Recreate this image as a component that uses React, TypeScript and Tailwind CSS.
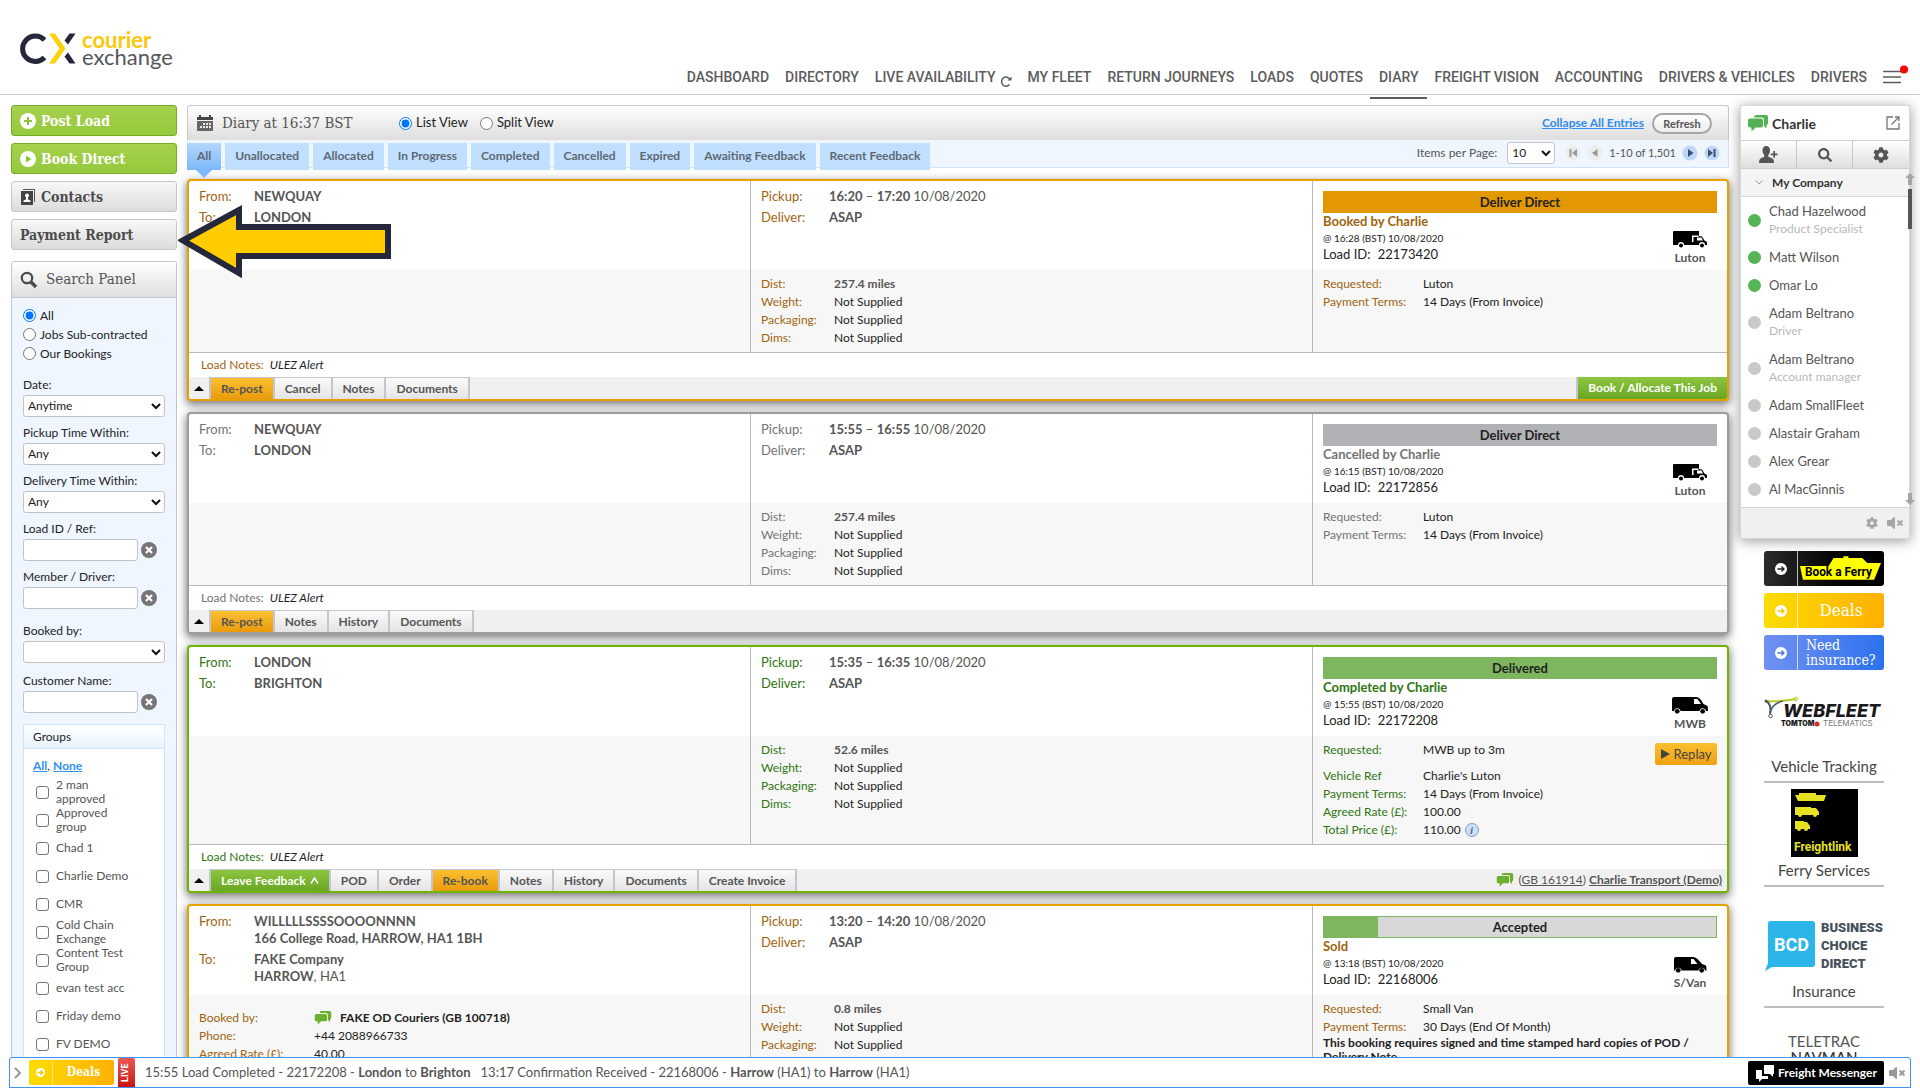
import React from "react";
import { FaCog, FaSearch, FaVolumeMute } from "react-icons/fa";

type Theme = "amber" | "grey" | "green";

type Row = { label: string; value: React.ReactNode; spaced?: boolean };

type Action = { text: string; tone?: "orange" | "green" };

type Load = {
  theme: Theme;
  from: React.ReactNode[];
  to: React.ReactNode[];
  start: string;
  end: string;
  status: string;
  progress?: number;
  event: string;
  at: string;
  id: string;
  vehicle: "Luton" | "MWB" | "S/Van";
  booking?: boolean;
  dist: string;
  rows: Row[];
  replay?: boolean;
  warning?: string;
  actions: Action[];
  footer?: "allocate" | "member";
};

const themes = {
  amber: {
    border: "border-[#e6a100]",
    label: "text-[#a0640f]",
    bar: "bg-[#e39700]",
  },
  grey: {
    border: "border-[#9c9ca2]",
    label: "text-[#737373]",
    bar: "bg-[#b1b2b6]",
  },
  green: {
    border: "border-[#6fb400]",
    label: "text-[#2f7512]",
    bar: "bg-[#7eb55f]",
  },
};

const slab = "font-['DejaVu_Serif_Condensed','DejaVu_Serif',serif]";
const greyFade = "bg-linear-to-b from-white to-[#dedede]";

const navItems = [
  "DASHBOARD",
  "DIRECTORY",
  "LIVE AVAILABILITY",
  "MY FLEET",
  "RETURN JOURNEYS",
  "LOADS",
  "QUOTES",
  "DIARY",
  "FREIGHT VISION",
  "ACCOUNTING",
  "DRIVERS & VEHICLES",
  "DRIVERS",
];

const tabs = [
  "All",
  "Unallocated",
  "Allocated",
  "In Progress",
  "Completed",
  "Cancelled",
  "Expired",
  "Awaiting Feedback",
  "Recent Feedback",
];

const groups = [
  "2 man approved",
  "Approved group",
  "Chad 1",
  "Charlie Demo",
  "CMR",
  "Cold Chain Exchange",
  "Content Test Group",
  "evan test acc",
  "Friday demo",
  "FV DEMO",
];

const contacts = [
  { name: "Chad Hazelwood", role: "Product Specialist", online: true },
  { name: "Matt Wilson", online: true },
  { name: "Omar Lo", online: true },
  { name: "Adam Beltrano", role: "Driver" },
  { name: "Adam Beltrano", role: "Account manager" },
  { name: "Adam SmallFleet" },
  { name: "Alastair Graham" },
  { name: "Alex Grear" },
  { name: "Al MacGinnis" },
];

const loads: Load[] = [
  {
    theme: "amber",
    from: [<b>NEWQUAY</b>],
    to: [<b>LONDON</b>],
    start: "16:20",
    end: "17:20",
    status: "Deliver Direct",
    event: "Booked by Charlie",
    at: "@ 16:28 (BST) 10/08/2020",
    id: "22173420",
    vehicle: "Luton",
    dist: "257.4 miles",
    rows: [
      { label: "Requested:", value: "Luton" },
      { label: "Payment Terms:", value: "14 Days (From Invoice)" },
    ],
    actions: [
      { text: "Re-post", tone: "orange" },
      { text: "Cancel" },
      { text: "Notes" },
      { text: "Documents" },
    ],
    footer: "allocate",
  },
  {
    theme: "grey",
    from: [<b>NEWQUAY</b>],
    to: [<b>LONDON</b>],
    start: "15:55",
    end: "16:55",
    status: "Deliver Direct",
    event: "Cancelled by Charlie",
    at: "@ 16:15 (BST) 10/08/2020",
    id: "22172856",
    vehicle: "Luton",
    dist: "257.4 miles",
    rows: [
      { label: "Requested:", value: "Luton" },
      { label: "Payment Terms:", value: "14 Days (From Invoice)" },
    ],
    actions: [
      { text: "Re-post", tone: "orange" },
      { text: "Notes" },
      { text: "History" },
      { text: "Documents" },
    ],
  },
  {
    theme: "green",
    from: [<b>LONDON</b>],
    to: [<b>BRIGHTON</b>],
    start: "15:35",
    end: "16:35",
    status: "Delivered",
    event: "Completed by Charlie",
    at: "@ 15:55 (BST) 10/08/2020",
    id: "22172208",
    vehicle: "MWB",
    dist: "52.6 miles",
    rows: [
      { label: "Requested:", value: "MWB up to 3m", spaced: true },
      { label: "Vehicle Ref", value: "Charlie's Luton" },
      { label: "Payment Terms:", value: "14 Days (From Invoice)" },
      { label: "Agreed Rate (£):", value: "100.00" },
      {
        label: "Total Price (£):",
        value: (
          <span className="flex items-center gap-1">
            110.00
            <span className="flex h-[14px] w-[14px] items-center justify-center rounded-full border border-[#7f9cc0] bg-[#cfe0f5] font-['Liberation_Serif',serif] text-[11px] leading-none font-bold text-[#4a6fa5] italic">
              i
            </span>
          </span>
        ),
      },
    ],
    replay: true,
    actions: [
      { text: "Leave Feedback", tone: "green" },
      { text: "POD" },
      { text: "Order" },
      { text: "Re-book", tone: "orange" },
      { text: "Notes" },
      { text: "History" },
      { text: "Documents" },
      { text: "Create Invoice" },
    ],
    footer: "member",
  },
  {
    theme: "amber",
    from: [<b>WILLLLLSSSSOOOONNNN</b>, <b>166 College Road, HARROW, HA1 1BH</b>],
    to: [
      <b>FAKE Company</b>,
      <>
        <b>HARROW</b>, HA1
      </>,
    ],
    start: "13:20",
    end: "14:20",
    status: "Accepted",
    progress: 14,
    event: "Sold",
    at: "@ 13:18 (BST) 10/08/2020",
    id: "22168006",
    vehicle: "S/Van",
    booking: true,
    dist: "0.8 miles",
    rows: [
      { label: "Requested:", value: "Small Van" },
      { label: "Payment Terms:", value: "30 Days (End Of Month)" },
    ],
    warning:
      "This booking requires signed and time stamped hard copies of POD / Delivery Note",
    actions: [],
  },
];

const ChatIcon = ({ className }: { className: string }) => (
  <svg viewBox="0 0 20 17" fill="currentColor" className={className}>
    <path d="M8 0h10q2 0 2 2v6q0 2-1.500 2v3.500L16 11V5q0-2.500-2.500-2.500H6Q6 0 8 0z" />
    <path d="M2 3.500h11q2 0 2 2v5q0 2-2 2H7.500L3.500 16.500v-4H2q-2 0-2-2v-5q0-2 2-2z" />
  </svg>
);

const ArrowCircle = ({ color }: { color: string }) => (
  <svg viewBox="0 0 12 12" className="h-3 w-3">
    <circle cx="6" cy="6" r="6" fill="#fff" />
    <path d="M2.500 6h6.500M6.500 3.500L9 6 6.500 8.500" fill="none" stroke={color} strokeWidth="1.300" />
  </svg>
);

const Logo = () => (
  <a href="#" aria-label="Courier Exchange" className="flex items-center gap-[6px]">
    <svg viewBox="0 0 56 38" className="h-[38px] w-14">
      <path d="M24.500 11A12.700 12.700 0 1 0 24.500 28.500" fill="none" stroke="#25273a" strokeWidth="5" />
      <path d="M29 4.500h6L45.500 19.500 35 34.500h-6L39.500 19.500z" fill="#fdd20a" />
      <path d="M49.500 4.500h6L48 15.500l-3.500-4zM44.500 27.500l3.500-4 7.500 11h-6z" fill="#25273a" />
    </svg>
    <span className="flex flex-col text-[22px] leading-[17px]">
      <span className="font-bold text-[#fdc70a]">courier</span>
      <span className="text-[#55565f]">exchange</span>
    </span>
  </a>
);

const VanIcon = ({ type }: { type: Load["vehicle"] }) => {
  if (type === "Luton") {
    return (
      <svg viewBox="0 0 34 17" className="h-[17px] w-[34px]">
        <path d="M1 0h25v5l3 .5 2.500 4L34 11v3h-2a3 3 0 0 0-6 0H11a3 3 0 0 0-6 0H0V1q0-1 1-1z" fill="#000" />
        <path d="M19 4.500h6.500V6h-5v5H19z" fill="#fff" />
        <path d="M24 6.500h4.500l1.500 3h-6z" fill="#fff" />
        <circle cx="8" cy="14.500" r="2" fill="#000" />
        <circle cx="29" cy="14.500" r="2" fill="#000" />
      </svg>
    );
  }
  return (
    <svg viewBox="0 0 36 17" className="h-[17px] w-[36px]">
      <path
        d={
          type === "MWB"
            ? "M2 0h22q3 0 5 3l2.500 4 4 2q.5 1 .5 5h-2a3.300 3.300 0 0 0-6.500 0H8.500a3.300 3.300 0 0 0-6.500 0H0V2q0-2 2-2z"
            : "M4 1h17q3 0 5 2.500L30 8l4 1.500q.5 1 .5 5H33a3.300 3.300 0 0 0-6.500 0H9.500a3.300 3.300 0 0 0-6.500 0H2V3q0-2 2-2z"
        }
        fill="#000"
      />
      <path d={type === "MWB" ? "M22 2h3.500l3.500 5h-7z" : "M19 3h2.500l4 5H19z"} fill="#fff" />
      <circle cx={type === "MWB" ? 5.2 : 6.2} cy="14.300" r="2.400" fill="#000" />
      <circle cx={type === "MWB" ? 30.7 : 29.7} cy="14.300" r="2.400" fill="#000" />
    </svg>
  );
};

const Header = () => (
  <header className="flex h-[95px] shrink-0 justify-between border-b border-[#c8c8c8] pl-5">
    <div className="pt-[29px]">
      <Logo />
    </div>
    <nav className="flex items-end gap-4 pr-[11px] font-['Roboto',sans-serif] text-sm font-medium text-[#5c5c5c]">
      {navItems.map((item) => (
        <a
          key={item}
          href="#"
          className={
            item === "DIARY"
              ? "-mx-[9px] -mb-[5px] border-b-2 border-[#5c5c5c] px-[9px] pb-[10px]"
              : "flex items-end gap-1 pb-[7px]"
          }
        >
          {item}
          {item === "LIVE AVAILABILITY" && (
            <svg viewBox="0 0 12 12" className="h-3 w-3">
              <path d="M9.500 9.500A4.500 4.500 0 1 1 10 4.500" fill="none" stroke="#5c5c5c" strokeWidth="1.500" />
              <path d="M11.500 1.500v4H7.500z" fill="#5c5c5c" />
            </svg>
          )}
        </a>
      ))}
      <button type="button" aria-label="Menu" className="pb-[9px]">
        <svg viewBox="0 0 26 20" className="h-5 w-[26px]">
          <path d="M0 6.500h18M0 12h18M0 17.500h18" stroke="#5c5c5c" strokeWidth="1.500" />
          <circle cx="21" cy="4.500" r="4" fill="#f00" />
        </svg>
      </button>
    </nav>
  </header>
);

const SelectBox = ({ id, value, className }: { id: string; value: string; className: string }) => (
  <div className={`relative ${className}`}>
    <select
      id={id}
      className="h-[22px] w-full appearance-none rounded-[3px] border border-[#c3c3c3] bg-white pl-1 text-xs leading-5 text-[#222]"
    >
      <option>{value}</option>
    </select>
    <svg viewBox="0 0 10 7" className="pointer-events-none absolute top-2 right-1 h-[7px] w-[10px]">
      <path d="M1 1l4 4 4-4" fill="none" stroke="#111" strokeWidth="2" />
    </svg>
  </div>
);

const SelectField = ({ id, label, value = "" }: { id: string; label: string; value?: string }) => (
  <div>
    <label htmlFor={id} className="block leading-5">
      {label}
    </label>
    <SelectBox id={id} value={value} className="" />
  </div>
);

const TextField = ({ id, label }: { id: string; label: string }) => (
  <div>
    <label htmlFor={id} className="block leading-5">
      {label}
    </label>
    <div className="flex items-center gap-[3px]">
      <input id={id} type="text" className="h-[22px] w-[115px] rounded-[3px] border border-[#c3c3c3] bg-white px-1" />
      <button type="button" aria-label={`Clear ${label}`}>
        <svg viewBox="0 0 16 16" className="h-4 w-4">
          <circle cx="8" cy="8" r="8" fill="#757575" />
          <path d="M5 5l6 6M11 5l-6 6" stroke="#fff" strokeWidth="2.400" />
        </svg>
      </button>
    </div>
  </div>
);

const SideButton = ({ text, icon, green }: { text: string; icon?: React.ReactNode; green?: boolean }) => (
  <button
    type="button"
    className={`flex h-[31px] w-full items-center gap-[5px] rounded-[3px] border px-2 text-left text-sm font-bold ${slab} ${
      green
        ? "border-[#76ab27] bg-linear-to-b from-[#a6d14c] to-[#94c93d] text-white"
        : "border-[#c6c6c6] bg-linear-to-b from-[#f8f8f8] to-[#dcdcdc] text-[#4c4c4c]"
    }`}
  >
    {icon}
    {text}
  </button>
);

const Sidebar = () => (
  <aside className="flex w-[166px] shrink-0 flex-col text-xs text-[#222]">
    <div className="flex flex-col gap-[7px]">
      <SideButton
        green
        text="Post Load"
        icon={
          <svg viewBox="0 0 16 16" className="h-4 w-4">
            <circle cx="8" cy="8" r="8" fill="#fff" />
            <path d="M8 4v8M4 8h8" stroke="#8fc43a" strokeWidth="2" />
          </svg>
        }
      />
      <SideButton
        green
        text="Book Direct"
        icon={
          <svg viewBox="0 0 16 16" className="h-4 w-4">
            <circle cx="8" cy="8" r="8" fill="#fff" />
            <path d="M6 4.500l5.500 3.500L6 11.500z" fill="#8fc43a" />
          </svg>
        }
      />
      <SideButton
        text="Contacts"
        icon={
          <svg viewBox="0 0 16 16" className="h-4 w-4">
            <path d="M3 0h12v13h-1V1H3z" fill="#555" />
            <path d="M1 2h12v14H1z" fill="#444" />
            <circle cx="7" cy="6.500" r="2" fill="#fff" />
            <path d="M6 8h2v2.500l2.500 1V13h-7v-1.500L6 10.500z" fill="#fff" />
          </svg>
        }
      />
      <div className="relative">
        <SideButton text="Payment Report" />
        <svg
          viewBox="0 0 214 76"
          className="pointer-events-none absolute -top-4 left-[167px] z-10 h-[76px] w-[214px]"
        >
          <path d="M5 37.500L61 7v17h149v29H61v17z" fill="#fc0" stroke="#25273a" strokeWidth="6" />
        </svg>
      </div>
    </div>
    <section className="mt-[11px] flex-1 rounded-t-[3px] border border-b-0 border-[#c3c7cc] bg-[#eff6ff]">
      <h2
        className={`flex h-[36px] items-center gap-2 border-b border-[#c3c7cc] px-2 text-[15px] text-[#555] ${slab} ${greyFade}`}
      >
        <svg viewBox="0 0 18 18" className="h-[18px] w-[18px]">
          <circle cx="7" cy="7" r="5.200" fill="none" stroke="#4a4a4a" strokeWidth="2.200" />
          <path d="M11 11l5 5" stroke="#4a4a4a" strokeWidth="3.600" />
        </svg>
        Search Panel
      </h2>
      <form className="px-[11px] pt-2">
        {["All", "Jobs Sub-contracted", "Our Bookings"].map((text, i) => (
          <label key={text} className="flex items-center gap-1 leading-[19px]">
            <input type="radio" name="scope" defaultChecked={i === 0} className="h-[13px] w-[13px]" />
            {text}
          </label>
        ))}
        <div className="mt-3 flex flex-col gap-[6px]">
          <SelectField id="date" label="Date:" value="Anytime" />
          <SelectField id="pickup" label="Pickup Time Within:" value="Any" />
          <SelectField id="delivery" label="Delivery Time Within:" value="Any" />
          <TextField id="load-id" label="Load ID / Ref:" />
          <TextField id="member" label="Member / Driver:" />
        </div>
        <div className="mt-3 flex flex-col gap-2">
          <SelectField id="booked-by" label="Booked by:" />
          <TextField id="customer" label="Customer Name:" />
        </div>
        <fieldset className="mt-[11px] border border-[#cfe6fa] bg-white">
          <div className="h-6 border-b border-[#cfe6fa] bg-linear-to-b from-white to-[#e8f4ff] px-[9px] leading-6">
            Groups
          </div>
          <div className="px-[9px] pt-2 pb-2">
            <p className="pb-[3px] leading-[18px]">
              <a href="#" className="font-bold text-[#3191ee] underline">
                All
              </a>
              ,{" "}
              <a href="#" className="font-bold text-[#3191ee] underline">
                None
              </a>
            </p>
            {groups.map((group) => (
              <label key={group} className="flex h-7 items-center gap-[7px] pr-5 pl-[3px] leading-[14px] text-[#555]">
                <input
                  type="checkbox"
                  className="h-[13px] w-[13px] shrink-0 appearance-none rounded-[3px] border border-[#767676] bg-white"
                />
                {group}
              </label>
            ))}
          </div>
        </fieldset>
      </form>
    </section>
  </aside>
);

const PagerButton = ({ label, path, active }: { label: string; path: string; active?: boolean }) => (
  <button type="button" aria-label={label}>
    <svg viewBox="0 0 16 16" className="h-4 w-4">
      <circle cx="8" cy="8" r="7.500" fill={active ? "#bdd6fa" : "#ededed"} />
      <path d={path} fill={active ? "#3b4f68" : "#9a9a9a"} />
    </svg>
  </button>
);

const DiaryHeader = () => (
  <div>
    <div
      className={`flex h-[35px] items-center rounded-t-[3px] border border-b-0 border-[#c8c8c8] pr-4 pl-[9px] ${greyFade}`}
    >
      <svg viewBox="0 0 16 16" className="h-4 w-4">
        <path d="M0 2h2V0h2v2h8V0h2v2h2v3H0z" fill="#444" />
        <path d="M0 6h16v10H0z" fill="#666" />
        <path d="M6 8h2v2H6zM9 8h2v2H9zM12 8h2v2h-2zM3 11h2v2H3zM6 11h2v2H6zM9 11h2v2H9zM12 11h2v2h-2z" fill="#e8e8e8" />
      </svg>
      <h1 className={`w-[186px] pl-[9px] text-[15px] whitespace-nowrap text-[#555] ${slab}`}>Diary at 16:37 BST</h1>
      <div className="flex gap-3 text-[13px] text-[#222]">
        <label className="flex items-center gap-1">
          <input type="radio" name="view" defaultChecked className="h-[13px] w-[13px]" />
          List View
        </label>
        <label className="flex items-center gap-1">
          <input type="radio" name="view" className="h-[13px] w-[13px]" />
          Split View
        </label>
      </div>
      <a href="#" className="ml-auto text-xs font-bold text-[#2f8cf0] underline">
        Collapse All Entries
      </a>
      <button
        type="button"
        className="ml-2 h-[21px] w-[60px] rounded-full border-2 border-[#a5a5a5] bg-linear-to-b from-white to-[#ececec] text-[11px] leading-none font-bold text-[#555]"
      >
        Refresh
      </button>
    </div>
    <div className="flex h-7 items-start border-r border-b border-[#cfe4fa] bg-[#eff6ff] pt-[2px]">
      <div className="flex gap-1">
        {tabs.map((tab, i) => (
          <div key={tab} className="relative">
            <button
              type="button"
              className={`h-[27px] px-[10px] text-xs font-bold text-[#5d6873] ${
                i === 0 ? "bg-linear-to-b from-[#b4d6fb] to-[#7db9fb]" : "bg-[#c1e0ff]"
              }`}
            >
              {tab}
            </button>
            {i === 0 && (
              <svg viewBox="0 0 16 8" className="absolute top-full left-1/2 h-2 w-4 -translate-x-1/2">
                <path d="M0 0h16L8 8z" fill="#7db9fb" />
              </svg>
            )}
          </div>
        ))}
      </div>
      <div className="ml-auto flex items-center gap-[6px] pr-2 text-xs text-[#555]">
        <label htmlFor="per-page">Items per Page:</label>
        <SelectBox id="per-page" value="10" className="mx-1 w-12" />
        <PagerButton label="First page" path="M4.500 4h2v8h-2zM12 4v8L7 8z" />
        <PagerButton label="Previous page" path="M10.500 4v8L5 8z" />
        <span className="text-[11px]">1-10 of 1,501</span>
        <PagerButton active label="Next page" path="M6 4v8l5.500-4z" />
        <PagerButton active label="Last page" path="M4 4v8l5-4zM9.500 4h2v8h-2z" />
      </div>
    </div>
  </div>
);

const LoadCard = ({ load }: { load: Load }) => {
  const theme = themes[load.theme];
  return (
    <article
      className={`overflow-hidden rounded-[4px] border-2 bg-white text-xs text-[#222] shadow-[0_3px_9px_1px_rgba(0,0,0,0.5)] ${theme.border}`}
    >
      <div className="grid grid-cols-[562fr_562fr_414fr] divide-x divide-[#b9b9bd]">
        {/* Route */}
        <div className="flex flex-col">
          <dl className="grid min-h-[89px] grid-cols-[55px_1fr] content-start gap-y-1 px-[10px] pt-[7px] text-[13px] leading-[17px] text-[#555]">
            <dt className={theme.label}>From:</dt>
            <dd>
              {load.from.map((line, i) => (
                <div key={i}>{line}</div>
              ))}
            </dd>
            <dt className={theme.label}>To:</dt>
            <dd>
              {load.to.map((line, i) => (
                <div key={i}>{line}</div>
              ))}
            </dd>
          </dl>
          <div className="flex-1 bg-[#f7f7f7]">
            {load.booking && (
              <dl className="grid grid-cols-[115px_1fr] px-[10px] pt-[14px] leading-[18px]">
                <dt className={theme.label}>Booked by:</dt>
                <dd className="flex items-center gap-2">
                  <ChatIcon className="h-[14px] w-[18px] text-[#6db02c]" />
                  <b>FAKE OD Couriers (GB 100718)</b>
                </dd>
                <dt className={theme.label}>Phone:</dt>
                <dd>+44 2088966733</dd>
                <dt className={theme.label}>Agreed Rate (£):</dt>
                <dd>40.00</dd>
              </dl>
            )}
          </div>
        </div>
        {/* Times and goods */}
        <div className="flex flex-col">
          <dl className="grid min-h-[89px] grid-cols-[68px_1fr] content-start gap-y-1 px-[10px] pt-[7px] text-[13px] leading-[17px] text-[#555]">
            <dt className={theme.label}>Pickup:</dt>
            <dd>
              <b>{load.start}</b> – <b>{load.end}</b> 10/08/2020
            </dd>
            <dt className={theme.label}>Deliver:</dt>
            <dd>
              <b>ASAP</b>
            </dd>
          </dl>
          <dl className="grid flex-1 grid-cols-[73px_1fr] content-start bg-[#f7f7f7] px-[10px] py-[5px] leading-[18px]">
            <dt className={theme.label}>Dist:</dt>
            <dd className="font-bold text-[#555]">{load.dist}</dd>
            <dt className={theme.label}>Weight:</dt>
            <dd>Not Supplied</dd>
            <dt className={theme.label}>Packaging:</dt>
            <dd>Not Supplied</dd>
            {!load.booking && (
              <>
                <dt className={theme.label}>Dims:</dt>
                <dd>Not Supplied</dd>
              </>
            )}
          </dl>
        </div>
        {/* Status */}
        <div className="flex flex-col">
          <div className="min-h-[89px] px-[10px] pt-[10px]">
            <div
              className={`relative h-[22px] text-center text-[13px] leading-[22px] font-bold ${
                load.progress ? "bg-[#d8d8d8] outline outline-1 -outline-offset-1 outline-[#7eb55f]" : theme.bar
              }`}
            >
              {load.progress && (
                <div className="absolute inset-y-0 left-0 bg-[#7eb55f]" style={{ width: `${load.progress}%` }} />
              )}
              {load.status}
            </div>
            <div className="flex justify-between">
              <div className="text-[13px] leading-[17px]">
                <div className={`font-bold ${theme.label}`}>{load.event}</div>
                <div className="text-[10px] leading-4">{load.at}</div>
                <div>
                  Load ID: <span className="ml-1">{load.id}</span>
                </div>
              </div>
              <div className="flex w-[54px] flex-col items-center gap-[3px] pt-[18px] leading-[14px] font-bold text-[#555]">
                <VanIcon type={load.vehicle} />
                {load.vehicle}
              </div>
            </div>
          </div>
          <div className="relative flex-1 bg-[#f7f7f7] px-[10px] py-[5px] leading-[18px]">
            <dl>
              {load.rows.map((row) => (
                <div key={row.label} className={`grid grid-cols-[100px_1fr] ${row.spaced ? "mb-2" : ""}`}>
                  <dt className={theme.label}>{row.label}</dt>
                  <dd>{row.value}</dd>
                </div>
              ))}
            </dl>
            {load.warning && <p className="leading-[14px] font-bold">{load.warning}</p>}
            {load.replay && (
              <button
                type="button"
                className="absolute top-[7px] right-[10px] flex h-[22px] w-[62px] items-center justify-center gap-1 rounded-[2px] bg-linear-to-b from-[#fcc02f] to-[#efa00f] text-[13px] text-[#444]"
              >
                <svg viewBox="0 0 9 10" className="h-[10px] w-[9px]">
                  <path d="M0 0l9 5-9 5z" fill="#444" />
                </svg>
                Replay
              </button>
            )}
          </div>
        </div>
      </div>
      {load.actions.length > 0 && (
        <>
          <p className="h-[25px] border-t border-[#b9b9bd] px-3 leading-6">
            <span className={theme.label}>Load Notes:</span> <i className="ml-[3px]">ULEZ Alert</i>
          </p>
          <div className="flex h-[22px] bg-[#f0f0f0]">
            <button type="button" aria-label="Collapse entry" className="flex w-5 items-center justify-center">
              <svg viewBox="0 0 10 5" className="h-[5px] w-[10px]">
                <path d="M5 0l5 5H0z" fill="#000" />
              </svg>
            </button>
            <div className="flex divide-x-2 divide-[#c4c6cf] border-x-2 border-[#c4c6cf]">
              {load.actions.map((action) => (
                <button
                  key={action.text}
                  type="button"
                  className={`flex items-center gap-1 border-t border-t-[#c4c6cf] px-[10px] font-bold ${
                    action.tone === "orange"
                      ? "bg-linear-to-b from-[#fcc02f] to-[#e99b0a] text-[#555]"
                      : action.tone === "green"
                        ? "bg-linear-to-b from-[#8dc63f] to-[#69a624] text-white"
                        : "bg-linear-to-b from-[#fafafa] to-[#e4e4e4] text-[#555]"
                  }`}
                >
                  {action.text}
                  {action.tone === "green" && (
                    <svg viewBox="0 0 9 7" className="h-[7px] w-[9px]">
                      <path d="M1 6.500L4.500 1 8 6.500" fill="none" stroke="#fff" strokeWidth="1.500" />
                    </svg>
                  )}
                </button>
              ))}
            </div>
            {load.footer === "allocate" && (
              <button
                type="button"
                className="ml-auto border-l-2 border-[#c4c6cf] bg-linear-to-b from-[#8dc63f] to-[#69a624] px-[10px] font-bold text-white"
              >
                Book / Allocate This Job
              </button>
            )}
            {load.footer === "member" && (
              <div className="ml-auto flex items-center gap-1 pr-[5px] text-[#555]">
                <ChatIcon className="h-[14px] w-[18px] text-[#6db02c]" />
                <a href="#">
                  (<span className="underline">GB 161914</span>) <b className="underline">Charlie Transport (Demo)</b>
                </a>
              </div>
            )}
          </div>
        </>
      )}
    </article>
  );
};

const Messenger = () => (
  <section className="relative w-[170px] border border-[#d8d8d8] bg-white shadow-[0_2px_12px_rgba(0,0,0,0.4)]">
    <div className="flex h-[34px] items-center px-[7px]">
      <ChatIcon className="h-[17px] w-5 text-[#53b153]" />
      <b className="pt-[2px] pl-1 text-sm text-[#333]">Charlie</b>
      <button type="button" aria-label="Open in new window" className="mr-[2px] ml-auto">
        <svg viewBox="0 0 14 14" className="h-[14px] w-[14px]" fill="none" stroke="#777" strokeWidth="1.300">
          <path d="M7 1H1v12h12V7M9 1h4v4M13 1L5.500 8.500" />
        </svg>
      </button>
    </div>
    <div
      className={`grid h-[29px] grid-cols-3 divide-x divide-[#c6c6c6] border-y border-[#cfcfcf] text-[#555] ${greyFade}`}
    >
      <button type="button" aria-label="Add contact" className="flex items-center justify-center">
        <svg viewBox="0 0 19 17" className="h-[17px] w-[19px]" fill="currentColor">
          <path d="M3.500 4.500Q3.500 0 7.200 0T11 4.500Q11 7.500 9.300 9.300v1.500l4.200 1.700q1.500.8 1.500 4.500H0q0-3.700 1.500-4.500l3.800-1.700V9.300Q3.500 7.500 3.500 4.500z" />
          <path d="M14.300 5h1.700v2.500h2.500v1.700H16v2.500h-1.700V9.200h-2.500V7.500h2.500z" />
        </svg>
      </button>
      <button type="button" aria-label="Search contacts" className="flex items-center justify-center">
        <FaSearch size={14} />
      </button>
      <button type="button" aria-label="Settings" className="flex items-center justify-center">
        <FaCog size={16} />
      </button>
    </div>
    <button
      type="button"
      className="flex h-7 w-full items-center gap-[9px] border-b border-[#d5d5d5] bg-[#f4f4f4] pl-[14px] text-xs font-bold text-[#333]"
    >
      <svg viewBox="0 0 8 5" className="h-[5px] w-2">
        <path d="M.500 .500L4 4 7.500 .500" fill="none" stroke="#999" />
      </svg>
      My Company
    </button>
    <ul className="flex h-[310px] flex-col text-[13px] text-[#555]">
      {contacts.map((contact, i) => (
        <li key={i} className={`flex items-center gap-2 pl-[7px] ${contact.role ? "h-[46px]" : "h-7"}`}>
          <span className={`h-[13px] w-[13px] rounded-full ${contact.online ? "bg-[#55b455]" : "bg-[#c9c9c9]"}`} />
          <span className="leading-[18px]">
            {contact.name}
            {contact.role && <span className="block text-xs leading-[18px] text-[#b9b9b9]">{contact.role}</span>}
          </span>
        </li>
      ))}
    </ul>
    <div className="flex h-[31px] items-center justify-end gap-[9px] border-t border-[#d5d5d5] bg-[#f0f0f0] pr-[6px] text-[#a5a5a5]">
      <FaCog size={12} />
      <FaVolumeMute size={16} />
    </div>
    {/* List scrollbar */}
    <div className="absolute top-[67px] -right-[6px] flex h-[332px] w-[10px] flex-col items-center">
      <svg viewBox="0 0 10 12" className="h-3 w-[10px]">
        <path d="M5 0l5 5H7v7H3V5H0z" fill="#a5a5a5" />
      </svg>
      <div className="mt-1 h-10 w-1 bg-[#555]" />
      <svg viewBox="0 0 10 12" className="mt-auto h-3 w-[10px]">
        <path d="M5 12L0 7h3V0h4v7h3z" fill="#a5a5a5" />
      </svg>
    </div>
  </section>
);

const Advert = ({ caption, children }: { caption: string; children: React.ReactNode }) => (
  <a href="#" className="flex w-[120px] flex-col items-center border-b-2 border-[#bdbdbd] text-[15px] text-[#444]">
    {children}
    <span className="pb-[5px] leading-5">{caption}</span>
  </a>
);

const Adverts = () => (
  <div className="ml-6 flex w-[120px] flex-col pt-3">
    <div className="flex flex-col gap-[7px]">
      <a
        href="#"
        className="grid h-[35px] grid-cols-[34px_1fr] items-center divide-x divide-white/70 rounded-[3px] bg-linear-to-r from-[#2c2c2c] to-black"
      >
        <span className="flex h-full items-center justify-center">
          <ArrowCircle color="#222" />
        </span>
        <svg viewBox="0 0 86 35" className="h-[35px] w-[85px]">
          <path d="M2 15h29l5-8h10V5h5v2h14l5 5h14l-7 17H5z" fill="#ff0" />
          <text x="7" y="25" fontSize="12" fontWeight="700" fontFamily="Roboto, sans-serif">
            Book a Ferry
          </text>
        </svg>
      </a>
      <a
        href="#"
        className={`grid h-[35px] grid-cols-[34px_1fr] items-center divide-x divide-white/70 rounded-[3px] bg-linear-to-r from-[#fbdc03] to-[#ffb000] text-center text-[17px] text-white ${slab}`}
      >
        <span className="flex h-full items-center justify-center">
          <ArrowCircle color="#f3c800" />
        </span>
        <span className="leading-[35px]">Deals</span>
      </a>
      <a
        href="#"
        className={`grid h-[35px] grid-cols-[34px_1fr] items-center divide-x divide-white/70 rounded-[3px] bg-linear-to-r from-[#7090f0] to-[#2a72ee] text-sm text-white ${slab}`}
      >
        <span className="flex h-full items-center justify-center">
          <ArrowCircle color="#4a72e0" />
        </span>
        <span className="flex h-full flex-col justify-center pl-2 leading-[15px]">
          <span>Need</span>
          <span>insurance?</span>
        </span>
      </a>
    </div>
    <div className="flex flex-col gap-[6px] pt-[26px]">
      <Advert caption="Vehicle Tracking">
        <svg viewBox="0 0 122 60" className="h-[60px] w-[122px]">
          <path d="M3 5Q16 6 33 3" fill="none" stroke="#b9cf2c" strokeWidth="1.800" />
          <path d="M3 5Q9 8 7 18" fill="none" stroke="#4c5a66" strokeWidth="2" />
          <path d="M7 18Q8 8 20 5" fill="none" stroke="#4c5a66" strokeWidth="1.500" />
          <circle cx="3" cy="5" r="1.500" fill="#4c5a66" />
          <circle cx="7.500" cy="20" r="1.800" fill="none" stroke="#4c5a66" />
          <circle cx="33" cy="3" r="1.800" fill="none" stroke="#b9cf2c" />
          <text x="20" y="21" fontSize="18" fontWeight="800" fontStyle="italic" fontFamily="Inter, sans-serif" fill="#1a1a1a">
            WEBFLEET
          </text>
          <text x="18" y="30" fontSize="7" fontWeight="900" fontFamily="Inter, sans-serif" fill="#1a1a1a">
            TOMTOM
          </text>
          <circle cx="54" cy="28" r="2.500" fill="#e02a20" />
          <text x="60" y="30" fontSize="8" fontFamily="Inter, sans-serif" fill="#777">
            TELEMATICS
          </text>
        </svg>
      </Advert>
      <Advert caption="Ferry Services">
        <svg viewBox="0 0 67 68" className="mb-[3px] h-[68px] w-[67px]">
          <path d="M0 0h67v68H0z" fill="#000" />
          <path d="M4 6h4V4h17v2h10l-2 6H7z" fill="#e6e222" />
          <path d="M4 18h16v1h5l3 4v3h-2a2 2 0 0 1-4 0H11a2 2 0 0 1-4 0H4z" fill="#e6e222" />
          <path d="M4 32h9v1h3l3 4v3h-2a2 2 0 0 1-4 0H10a2 2 0 0 1-4 0H4z" fill="#e6e222" />
          <text x="3" y="62" fontSize="12" fontWeight="700" fontFamily="Roboto, sans-serif" fill="#e6e222">
            Freightlink
          </text>
        </svg>
      </Advert>
    </div>
    <div className="pt-[31px]">
      <Advert caption="Insurance">
        <svg viewBox="0 0 120 63" className="h-[63px] w-[120px]">
          <path d="M6 3h42q3 0 3 3v40q0 3-3 3H8L1 53 4 45V6q0-3 2-3z" fill="#2cb5e8" />
          <text x="10" y="33" fontSize="18" fontWeight="700" fontFamily="Roboto, sans-serif" fill="#fff">
            BCD
          </text>
          <g fontSize="13" fontWeight="900" fontFamily="Roboto, sans-serif" fill="#46505a">
            <text x="57" y="14">BUSINESS</text>
            <text x="57" y="32">CHOICE</text>
            <text x="57" y="50">DIRECT</text>
          </g>
        </svg>
      </Advert>
    </div>
    <a href="#" className="pt-[25px] text-center text-[15px] leading-4 text-[#555]">
      TELETRAC
      <br />
      <span className="font-medium text-[#333]">NAVMAN</span>
    </a>
  </div>
);

const LiveBar = () => (
  <footer className="mx-[9px] mb-px flex h-[31px] shrink-0 items-center rounded-t-[3px] border border-[#3d97f2] bg-white text-[13px] text-[#555]">
    <svg viewBox="0 0 8 12" className="mx-1 h-3 w-2">
      <path d="M1 1l5 5-5 5" fill="none" stroke="#999" strokeWidth="2" />
    </svg>
    <a
      href="#"
      className={`ml-[3px] grid h-[25px] w-[85px] grid-cols-[24px_1fr] divide-x divide-white/40 rounded-[2px] bg-linear-to-r from-[#fbdc03] to-[#ffb000] text-center text-xs font-bold text-white ${slab}`}
    >
      <span className="flex items-center justify-center">
        <svg viewBox="0 0 12 12" className="h-[9px] w-[9px]">
          <circle cx="6" cy="6" r="6" fill="#fff" />
          <path d="M2 6h7M6 3l3 3-3 3" fill="none" stroke="#f3c800" strokeWidth="2" />
        </svg>
      </span>
      <span className="leading-[25px]">Deals</span>
    </a>
    <span className="ml-1 flex h-[29px] w-[17px] items-center justify-center rounded-t-[2px] bg-linear-to-b from-[#ec5555] to-[#c80f0f] font-['Roboto',sans-serif] text-[9px] font-bold text-white">
      <span className="-rotate-90">LIVE</span>
    </span>
    <p className="flex gap-[10px] pl-[10px]">
      <span>
        15:55 Load Completed - 22172208 - <b>London</b> to <b>Brighton</b>
      </span>
      <span>
        13:17 Confirmation Received - 22168006 - <b>Harrow</b> (HA1) to <b>Harrow</b> (HA1)
      </span>
    </p>
    <button
      type="button"
      className="ml-auto flex h-6 w-[136px] items-center justify-center gap-[3px] rounded-[2px] bg-black text-xs font-bold text-white"
    >
      <svg viewBox="0 0 20 18" className="h-[18px] w-5">
        <path d="M9 1h10v9h-1v3l-3-3H9z" fill="#fff" />
        <path d="M1 6h6v6h6v3H7l-3 3v-3H1z" fill="#fff" />
      </svg>
      Freight Messenger
    </button>
    <button type="button" aria-label="Mute" className="px-[5px] text-[#999]">
      <FaVolumeMute size={16} />
    </button>
  </footer>
);

const App = () => {
  return (
    <div className="flex h-screen flex-col overflow-hidden bg-white font-['Lato',sans-serif]">
      <Header />
      <div className="flex min-h-0 flex-1 overflow-hidden pt-[10px] pl-[11px]">
        <Sidebar />
        <main className="ml-[10px] min-w-0 flex-1">
          <DiaryHeader />
          <div className="mt-[11px] flex flex-col gap-[11px]">
            {loads.map((load) => (
              <LoadCard key={load.id} load={load} />
            ))}
          </div>
        </main>
        <aside className="ml-[11px] w-[180px] shrink-0">
          <Messenger />
          <Adverts />
        </aside>
      </div>
      <LiveBar />
    </div>
  );
};

export default App;
